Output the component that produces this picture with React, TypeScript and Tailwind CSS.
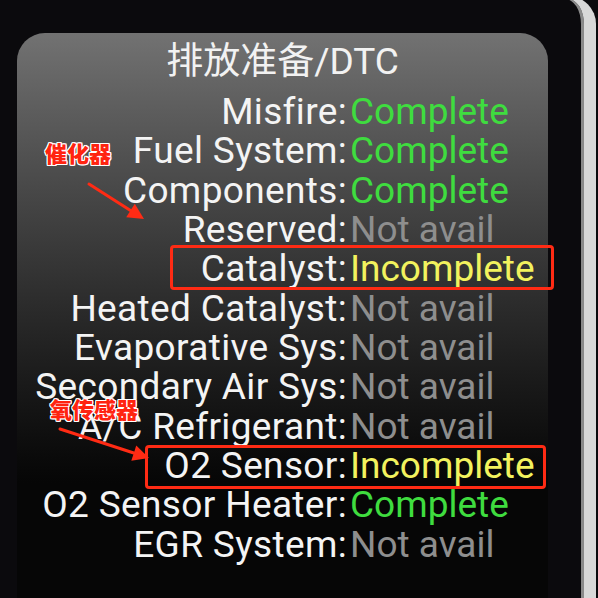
import React from "react";

type Status = "complete" | "incomplete" | "na";

const rows: { label: string; status: Status }[] = [
  { label: "Misfire", status: "complete" },
  { label: "Fuel System", status: "complete" },
  { label: "Components", status: "complete" },
  { label: "Reserved", status: "na" },
  { label: "Catalyst", status: "incomplete" },
  { label: "Heated Catalyst", status: "na" },
  { label: "Evaporative Sys", status: "na" },
  { label: "Secondary Air Sys", status: "na" },
  { label: "A/C Refrigerant", status: "na" },
  { label: "O2 Sensor", status: "incomplete" },
  { label: "O2 Sensor Heater", status: "complete" },
  { label: "EGR System", status: "na" },
];

const statusText: Record<Status, string> = {
  complete: "Complete",
  incomplete: "Incomplete",
  na: "Not avail",
};

const statusColor: Record<Status, string> = {
  complete: "text-[#3fdc3f]",
  incomplete: "text-[#f2f25e]",
  na: "text-[#8e8e8e]",
};

// red arrow used by the annotations
const Arrow = ({ x1, y1, x2, y2 }: { x1: number; y1: number; x2: number; y2: number }) => {
  const a = Math.atan2(y2 - y1, x2 - x1);
  const len = 16;
  const w = 8;
  const bx = x2 - Math.cos(a) * len;
  const by = y2 - Math.sin(a) * len;
  const px = -Math.sin(a) * w;
  const py = Math.cos(a) * w;
  return (
    <g>
      <line x1={x1} y1={y1} x2={bx} y2={by} stroke="#ff2b14" strokeWidth={3} strokeLinecap="round" />
      <polygon points={`${x2},${y2} ${bx + px},${by + py} ${bx - px},${by - py}`} fill="#ff2b14" />
    </g>
  );
};

const Note = ({ text, className }: { text: string; className: string }) => (
  <div
    className={`absolute text-[22px] font-black leading-none text-[#ff2410] ${className}`}
    style={{
      fontFamily: '"Noto Sans CJK SC", sans-serif',
      textShadow:
        "1px 0 0 #fff, -1px 0 0 #fff, 0 1px 0 #fff, 0 -1px 0 #fff, 1px 1px 0 #fff, -1px -1px 0 #fff, 1px -1px 0 #fff, -1px 1px 0 #fff",
    }}
  >
    {text}
  </div>
);

export default function App() {
  return (
    <div
      className="relative w-[598px] h-[598px] overflow-hidden bg-[#0b0a0d] pl-[17px] pt-[33px]"
      style={{ fontFamily: 'Roboto, "Noto Sans CJK SC", sans-serif' }}
    >
      {/* device bezel on the right */}
      <div className="absolute right-[2px] top-[-4px] h-[620px] w-[50px] rounded-tr-[28px] border-r-[12px] border-t-[3px] border-[#d8d8d8] shadow-[inset_-3px_0_0_#8a8a8a]" />

      <div className="w-[531px] h-[600px] rounded-t-[28px] bg-gradient-to-b from-[#727272] via-[#2c2c2c] via-45% to-[#060606] to-75%">
        <div className="h-[59px] pt-[4px] text-center text-[37px] leading-[50px] text-[#f2f2f2]">
          排放准备/DTC
        </div>
        <div className="flex flex-col text-[37px] leading-[39.35px]">
          {rows.map((r) => (
            <div key={r.label} className="flex whitespace-nowrap">
              <div className="w-[330px] shrink-0 text-right tracking-[0.35px] text-[#f4f4f4]">{r.label}:</div>
              <div className={`pl-[3px] ${statusColor[r.status]}`}>{statusText[r.status]}</div>
            </div>
          ))}
        </div>
      </div>

      {/* highlight boxes */}
      <div className="absolute left-[170px] top-[245px] w-[384px] h-[45px] rounded-[4px] border-[3px] border-[#ff2b14]" />
      <div className="absolute left-[145px] top-[445px] w-[401px] h-[44px] rounded-[4px] border-[3px] border-[#ff2b14]" />

      <Note text="催化器" className="left-[45px] top-[141px]" />
      <Note text="氧传感器" className="left-[50px] top-[397px]" />

      <svg className="absolute left-0 top-0" width={598} height={598}>
        <Arrow x1={89} y1={184} x2={144} y2={219} />
        <Arrow x1={60} y1={429} x2={149} y2={458} />
      </svg>
    </div>
  );
}
